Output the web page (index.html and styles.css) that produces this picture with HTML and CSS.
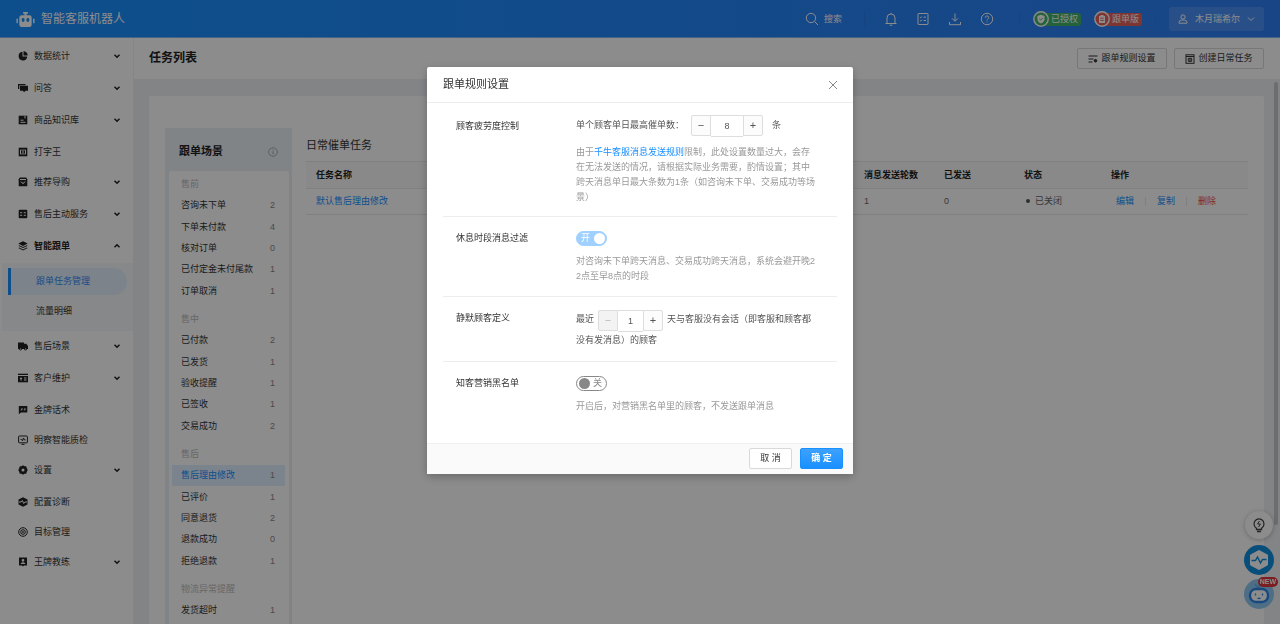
FILE: index.html
```html
<!DOCTYPE html>
<html lang="zh-CN">
<head>
<meta charset="utf-8">
<meta name="viewport" content="width=device-width, initial-scale=1">
<title>智能客服机器人</title>
<link rel="stylesheet" href="styles.css">
</head>
<body>
<header class="topbar">
  <a class="brand" href="#">
    <svg class="brand-logo" viewBox="0 0 20 17" fill="currentColor"><path d="M7.500.5h5v2h-1.500v1.500h3a2.500 2.500 0 0 1 2.500 2.500v7.500a2.500 2.500 0 0 1-2.500 2.500h-8A2.500 2.500 0 0 1 3.500 14V6.500A2.500 2.500 0 0 1 6 4h3V2.500H7.500zM7.500 7A1.500 1.500 0 0 0 6 8.500v1a1.500 1.500 0 0 0 3 0v-1A1.500 1.500 0 0 0 7.500 7zm5 0A1.500 1.500 0 0 0 11 8.500v1a1.500 1.500 0 0 0 3 0v-1A1.500 1.500 0 0 0 12.500 7z"/><rect x=".5" y="7.500" width="1.500" height="5" rx=".7"/><rect x="18" y="7.500" width="1.500" height="5" rx=".7"/></svg>
    <span>智能客服机器人</span>
  </a>
  <button class="top-search" type="button">
    <svg class="icon-top" viewBox="0 0 14 14"><circle cx="6" cy="6" r="4.700"/><path d="M9.500 9.500l3.500 3.500"/></svg>
    <span>搜索</span>
  </button>
  <nav class="top-tools">
    <button type="button" aria-label="通知"><svg class="icon-top" viewBox="0 0 14 14"><path d="M1.500 11.500h11M3 11.500V6a4 4 0 0 1 8 0v5.500M7 2V.800M5.700 13.200h2.600"/></svg></button>
    <button type="button" aria-label="记录"><svg class="icon-top" viewBox="0 0 14 14"><rect x="2" y="1.500" width="10" height="11" rx=".5"/><path d="M4 5.200l.8.600 1-1.300M7.500 5.200H10M4 8.500l.8.600 1-1.300M7.500 8.500H10"/></svg></button>
    <button type="button" aria-label="下载"><svg class="icon-top" viewBox="0 0 14 14"><path d="M7 1.500v7.500M4 6.300l3 3 3-3M1.500 10v2.700h11V10"/></svg></button>
    <button type="button" aria-label="帮助"><svg class="icon-top" viewBox="0 0 14 14"><circle cx="7" cy="7" r="5.700"/><path d="M5.300 5.800A1.700 1.700 0 1 1 7.600 7.200Q7 7.500 7 8.400M7 9.500v1"/></svg></button>
  </nav>
  <div class="top-tags">
    <span class="tag tag-green"><svg class="tag-icon" viewBox="0 0 16 16"><circle cx="8" cy="8" r="7.200" fill="#43b36b" stroke="#fff" stroke-width="1.400"/><path d="M8 3.800l3.600 1.200v3c0 2.200-1.500 3.600-3.600 4.500C5.900 11.600 4.400 10.200 4.400 8V5z" fill="#fff"/><path d="M6.300 7.900l1.300 1.200 2.200-2.200" fill="none" stroke="#43b36b"/></svg>已授权</span>
    <span class="tag tag-red"><svg class="tag-icon" viewBox="0 0 16 16"><circle cx="8" cy="8" r="7.200" fill="#e8625c" stroke="#fff" stroke-width="1.400"/><path d="M5 5h1.500V4h3v1H11v7H5z" fill="#fff"/><path d="M6.300 7.200h3.400M6.300 9.400h3.400" stroke="#e8625c"/></svg>跟单版</span>
  </div>
  <button class="user" type="button">
    <svg class="icon-user" viewBox="0 0 10 10"><circle cx="5" cy="3" r="2.100"/><path d="M1 9.200V8.500Q1 6.300 3.600 6h2.800Q9 6.300 9 8.500v.7z"/></svg>
    <span>木月瑞希尔</span>
    <svg class="icon-caret" viewBox="0 0 8 8"><path d="M1 2.500l3 3 3-3"/></svg>
  </button>
</header>

<div class="shell">
  <nav class="sidebar">
    <a class="side-item has-sub" href="#"><svg class="side-icon" viewBox="0 0 10 10"><path d="M4.500.8v4.700h4.700A4.300 4.300 0 1 1 4.500.8z"/><path d="M5.500.3a4.200 4.200 0 0 1 4.200 4.200H5.500z"/></svg><span>数据统计</span><svg class="chev" viewBox="0 0 8 8"><path d="M1.500 2.700L4 5.200l2.500-2.500"/></svg></a>
    <a class="side-item has-sub" href="#"><svg class="side-icon" viewBox="0 0 10 10"><path d="M0 1h7.500v1.200H1.300V6H0z"/><path d="M2 2.800h8v5H7.500L6 9.300 5 7.800H2z"/></svg><span>问答</span><svg class="chev" viewBox="0 0 8 8"><path d="M1.500 2.700L4 5.200l2.500-2.500"/></svg></a>
    <a class="side-item has-sub" href="#"><svg class="side-icon" viewBox="0 0 10 10"><path d="M.7.7h8.600v8.600H.7z"/><path class="cut" d="M2.500 5.200h3M2.500 7.300h5M7 1v2.500"/></svg><span>商品知识库</span><svg class="chev" viewBox="0 0 8 8"><path d="M1.500 2.700L4 5.200l2.500-2.500"/></svg></a>
    <a class="side-item" href="#"><svg class="side-icon" viewBox="0 0 10 10"><path d="M.7.7h8.600v8.600H.7z"/><path class="cut" d="M3.700 3H2.500v4h1.200M6.300 3h1.200v4H6.300M5 2.300v5.400"/></svg><span>打字王</span></a>
    <a class="side-item has-sub" href="#"><svg class="side-icon" viewBox="0 0 10 10"><path d="M1.800.5h6.400l1.100 1.700v7.100H.7V2.200z"/><path class="cut" d="M2 2.500h6M3 4.500Q5 8.300 7 4.500"/></svg><span>推荐导购</span><svg class="chev" viewBox="0 0 8 8"><path d="M1.500 2.700L4 5.200l2.500-2.500"/></svg></a>
    <a class="side-item has-sub" href="#"><svg class="side-icon" viewBox="0 0 10 10"><rect x=".7" y=".7" width="8.600" height="8.600" rx="1"/><path class="cut" d="M2.200 3.700h2M5.800 3.700h2M2.200 6.300h2M5.800 6.300h2"/></svg><span>售后主动服务</span><svg class="chev" viewBox="0 0 8 8"><path d="M1.500 2.700L4 5.200l2.500-2.500"/></svg></a>
    <a class="side-item has-sub is-open" href="#"><svg class="side-icon" viewBox="0 0 10 10"><path d="M5 .3l4.700 2.300L5 4.900.3 2.600z"/><path d="M1.300 4.200L5 6l3.700-1.800 1 .5L5 7 .3 4.700z"/><path d="M1.300 6.600L5 8.400l3.700-1.800 1 .5L5 9.500.3 7.100z"/></svg><span>智能跟单</span><svg class="chev" viewBox="0 0 8 8"><path d="M1.500 5.200L4 2.700l2.500 2.500"/></svg></a>
    <div class="submenu">
      <a class="sub-item is-active" href="#">跟单任务管理</a>
      <a class="sub-item" href="#">流量明细</a>
    </div>
    <a class="side-item has-sub" href="#"><svg class="side-icon" viewBox="0 0 10 10"><path d="M0 1.500h6v1.200h2.300L10 5v3H0z"/><circle cx="2.500" cy="8" r="1.400"/><circle cx="7.500" cy="8" r="1.400"/><path class="cut" d="M2 8h1M7 8h1"/></svg><span>售后场景</span><svg class="chev" viewBox="0 0 8 8"><path d="M1.500 2.700L4 5.200l2.500-2.500"/></svg></a>
    <a class="side-item has-sub" href="#"><svg class="side-icon" viewBox="0 0 10 10"><path d="M0 .7h10v8.600H0z"/><path class="cut" d="M0 2.500h10M2 5.500h2M3 4.500v3M6 5h2.500M6 7h2.500"/></svg><span>客户维护</span><svg class="chev" viewBox="0 0 8 8"><path d="M1.500 2.700L4 5.200l2.500-2.500"/></svg></a>
    <a class="side-item" href="#"><svg class="side-icon" viewBox="0 0 10 10"><path d="M.8 1h8.500v6.500H3L.8 9.300z"/><path class="cut" d="M4 3.200v1.600H2.800M7 3.200v1.600H5.800"/></svg><span>金牌话术</span></a>
    <a class="side-item" href="#"><svg class="side-icon line" viewBox="0 0 10 10"><rect x=".6" y="1" width="8.800" height="6.800" rx=".8"/><path d="M3.500 9.300h3M2.500 4.300h1l1 1.500 1-2.800L6.500 5h1"/></svg><span>明察智能质检</span></a>
    <a class="side-item has-sub" href="#"><svg class="side-icon" viewBox="0 0 10 10"><path fill-rule="evenodd" d="M5 .3l1.500 1h1.700l.5 1.700L9.700 5 8.700 7l-.5 1.700H6.500L5 9.700l-1.500-1H1.800L1.300 7 .3 5l1-2 .5-1.700h1.700zM5 3.500a1.500 1.500 0 1 0 0 3 1.500 1.500 0 0 0 0-3z"/></svg><span>设置</span><svg class="chev" viewBox="0 0 8 8"><path d="M1.500 2.700L4 5.200l2.500-2.500"/></svg></a>
    <a class="side-item" href="#"><svg class="side-icon" viewBox="0 0 10 10"><path d="M5 .2l4.500 2.300v5L5 9.800.5 7.500v-5z"/><path class="cut" d="M1 5h2l1.300-1.500L5.700 6.500 7 5h2"/></svg><span>配置诊断</span></a>
    <a class="side-item" href="#"><svg class="side-icon line" viewBox="0 0 10 10"><circle cx="5" cy="5" r="4.300"/><circle cx="5" cy="5" r="2.300"/><circle cx="5" cy="5" r=".5"/></svg><span>目标管理</span></a>
    <a class="side-item has-sub" href="#"><svg class="side-icon" viewBox="0 0 10 10"><path fill-rule="evenodd" d="M1 .6h8v8H6L5 9.600l-1-1H1zM5 2a1.300 1.300 0 1 0 0 2.700A1.300 1.300 0 0 0 5 2zM2.600 7h4.800Q7 5.300 5 5.300T2.600 7z"/></svg><span>王牌教练</span><svg class="chev" viewBox="0 0 8 8"><path d="M1.500 2.700L4 5.200l2.500-2.500"/></svg></a>
  </nav>

  <main class="main">
    <div class="page-head">
      <h1>任务列表</h1>
      <div class="page-actions">
        <button class="btn" type="button"><svg class="btn-icon" viewBox="0 0 10 10"><path d="M.5 2h9M.5 5h5M.5 8h4"/><circle cx="7.500" cy="6.700" r="1.300" fill="currentColor"/></svg>跟单规则设置</button>
        <button class="btn" type="button"><svg class="btn-icon" viewBox="0 0 10 10"><rect x="1" y=".8" width="8" height="8.500"/><path d="M1 2.500h8M3.300 4.300h3.400v3H3.300zM5 4.300v3"/></svg>创建日常任务</button>
      </div>
    </div>
    <div class="content">
      <section class="card">
        <aside class="scenes">
          <div class="scenes-head"><h2>跟单场景</h2><svg class="icon-info" viewBox="0 0 10 10"><circle cx="5" cy="5" r="4.300"/><path d="M5 4.300v3M5 2.500v1"/></svg></div>
          <div class="scenes-body">
            <h3>售前</h3>
            <ul>
              <li><a href="#">咨询未下单</a><span>2</span></li>
              <li><a href="#">下单未付款</a><span>4</span></li>
              <li><a href="#">核对订单</a><span>0</span></li>
              <li><a href="#">已付定金未付尾款</a><span>1</span></li>
              <li><a href="#">订单取消</a><span>1</span></li>
            </ul>
            <h3>售中</h3>
            <ul>
              <li><a href="#">已付款</a><span>2</span></li>
              <li><a href="#">已发货</a><span>1</span></li>
              <li><a href="#">验收提醒</a><span>1</span></li>
              <li><a href="#">已签收</a><span>1</span></li>
              <li><a href="#">交易成功</a><span>2</span></li>
            </ul>
            <h3>售后</h3>
            <ul>
              <li class="is-active"><a href="#">售后理由修改</a><span>1</span></li>
              <li><a href="#">已评价</a><span>1</span></li>
              <li><a href="#">同意退货</a><span>2</span></li>
              <li><a href="#">退款成功</a><span>0</span></li>
              <li><a href="#">拒绝退款</a><span>1</span></li>
            </ul>
            <h3>物流异常提醒</h3>
            <ul class="short">
              <li><a href="#">发货超时</a><span>1</span></li>
            </ul>
          </div>
        </aside>
        <div class="tasks">
          <h2>日常催单任务</h2>
          <table>
            <colgroup><col><col class="c-rounds"><col class="c-sent"><col class="c-state"><col class="c-ops"></colgroup>
            <thead><tr><th>任务名称</th><th>消息发送轮数</th><th>已发送</th><th>状态</th><th>操作</th></tr></thead>
            <tbody><tr>
              <td><a class="link" href="#">默认售后理由修改</a></td><td>1</td><td>0</td>
              <td><span class="dot"></span>已关闭</td>
              <td><div class="ops"><a class="link" href="#">编辑</a><a class="link" href="#">复制</a><a class="danger" href="#">删除</a></div></td>
            </tr></tbody>
          </table>
        </div>
      </section>
      <div class="scrollbar"></div>
    </div>
  </main>
</div>

<div class="floaters">
  <button class="float float-tip" type="button" aria-label="提示"><svg viewBox="0 0 28 28" fill="none" stroke="#444" stroke-width="1.300"><path d="M11.500 18.500v-1.300a5 5 0 1 1 5 0v1.300zM12 20.500h4"/><path d="M14.500 10l-2 3h3l-2 3" stroke-width="1"/></svg></button>
  <button class="float float-pulse" type="button" aria-label="诊断"><svg viewBox="0 0 30 30"><path d="M15 5.500l8.500 4.500v10L15 24.500 6.500 20V10z" fill="#fff" stroke="#fff" stroke-linejoin="round"/><path d="M7.500 15.500h4l2-3.500 3 6 2-3.500h4" fill="none" stroke="#108ee0" stroke-width="1.500"/></svg></button>
  <button class="float float-bot" type="button" aria-label="机器人"><svg viewBox="0 0 30 30"><path d="M14 9l-3-4M15 9V6" stroke="#62b1f5" stroke-width="1.600"/><rect x="6" y="10" width="18" height="13" rx="6" fill="#fff" stroke="#2a86e8" stroke-width="2.400"/><path d="M11.500 14.500v2M18.500 14.500v2M13.500 19q1.500 1 3 0" fill="none" stroke="#2a86e8" stroke-width="1.300"/></svg><span class="new">NEW</span></button>
</div>

<div class="mask">
  <form class="modal" role="dialog" aria-labelledby="dlg-title">
    <div class="modal-head">
      <h2 id="dlg-title">跟单规则设置</h2>
      <button class="close" type="button" aria-label="关闭"><svg viewBox="0 0 10 10"><path d="M1 1l8 8M9 1L1 9"/></svg></button>
    </div>
    <div class="modal-body">
      <div class="rule">
        <label class="rule-name" for="max-count">顾客疲劳度控制</label>
        <div class="rule-value">
          <div class="line"><span>单个顾客单日最高催单数：</span>
            <span class="stepper"><button type="button" aria-label="减少">−</button><input id="max-count" type="text" value="8"><button type="button" aria-label="增加">+</button></span>
            <span class="unit">条</span></div>
          <p class="hint">由于<a class="link" href="#">千牛客服消息发送规则</a>限制，此处设置数量过大，会存在无法发送的情况，请根据实际业务需要，酌情设置；其中跨天消息单日最大条数为1条（如咨询未下单、交易成功等场景）</p>
        </div>
      </div>
      <div class="rule">
        <label class="rule-name" for="rest-filter">休息时段消息过滤</label>
        <div class="rule-value">
          <label class="switch"><input id="rest-filter" type="checkbox" checked disabled><span class="track"><span class="on">开</span><span class="off">关</span></span></label>
          <p class="hint">对咨询未下单跨天消息、交易成功跨天消息，系统会避开晚22点至早8点的时段</p>
        </div>
      </div>
      <div class="rule">
        <label class="rule-name" for="silent-days">静默顾客定义</label>
        <div class="rule-value sentence">最近<span class="stepper small"><button type="button" aria-label="减少" disabled>−</button><input id="silent-days" type="text" value="1"><button type="button" aria-label="增加">+</button></span>天与客服没有会话（即客服和顾客都没有发消息）的顾客</div>
      </div>
      <div class="rule">
        <label class="rule-name" for="blacklist">知客营销黑名单</label>
        <div class="rule-value">
          <label class="switch"><input id="blacklist" type="checkbox"><span class="track"><span class="on">开</span><span class="off">关</span></span></label>
          <p class="hint">开启后，对营销黑名单里的顾客，不发送跟单消息</p>
        </div>
      </div>
    </div>
    <div class="modal-foot">
      <button class="btn" type="button">取 消</button>
      <button class="btn primary" type="submit">确 定</button>
    </div>
  </form>
</div>
</body>
</html>
```

FILE: styles.css
```css
* { box-sizing: border-box; }
body {
  margin: 0;
  height: 100vh;
  overflow: hidden;
  display: flex;
  flex-direction: column;
  font-family: "Liberation Sans", "Noto Sans CJK SC", sans-serif;
  font-size: 9px;
  line-height: 15px;
  color: #333;
  background: #eef0f5;
}
h1, h2, h3, p, ul { margin: 0; padding: 0; }
ul { list-style: none; }
a { color: inherit; text-decoration: none; }
button, input { font: inherit; color: inherit; }
button { padding: 0; border: 0; background: none; }
svg { display: block; flex: none; }
.link { color: #1890ff; }

/* top bar */
.topbar {
  flex: none;
  height: 38px;
  padding: 1px 16px 0;
  display: flex;
  align-items: center;
  color: #fff;
  background: linear-gradient(90deg, #1890ff, #2f7ff5);
  border-bottom: 1px solid #7db4f5;
}
.brand { display: flex; align-items: center; gap: 6px; margin-right: auto; font-size: 12px; }
.brand-logo { width: 19px; height: 17px; }
.icon-top { width: 14px; height: 14px; fill: none; stroke: currentColor; }
.top-search { display: flex; align-items: center; gap: 5px; padding-right: 22px; border-right: 1px solid #2b7aec; }
.top-tools { display: flex; gap: 18px; padding: 0 25px 0 19px; border-right: 1px solid #2b7aec; }
.top-tags { display: flex; gap: 13px; padding: 0 13px; border-right: 1px solid #2b7aec; margin-right: 13px; }
.tag { display: flex; align-items: center; height: 13px; padding-right: 3px; gap: 2px; border-radius: 3px; }
.tag-icon { width: 16px; height: 16px; }
.tag-green { background: linear-gradient(90deg, #43b36b 0 100%) 8px 0 no-repeat; }
.tag-red { background: linear-gradient(90deg, #e8625c 0 100%) 8px 0 no-repeat; }
.user { display: flex; align-items: center; gap: 7px; height: 24px; padding: 0 9px; border-radius: 3px; background: #4b91f8; }
.icon-user { width: 10px; height: 10px; fill: none; stroke: currentColor; }
.icon-caret { width: 8px; height: 8px; fill: none; stroke: currentColor; }

.shell { flex: 1; min-height: 0; display: flex; }

/* side menu */
.sidebar { flex: none; width: 133px; padding: 3px 0 0 2px; background: #fff; }
.side-item { display: flex; align-items: center; gap: 6px; height: 30px; padding: 0 12px 0 16px; }
.side-item.has-sub { margin-bottom: 2px; }
.side-item.is-open { font-weight: bold; color: #222; }
.side-icon { width: 10px; height: 10px; fill: #222; }
.side-icon .cut { fill: none; stroke: #fff; }
.side-icon.line { fill: none; stroke: #222; }
.chev { width: 8px; height: 8px; margin-left: auto; fill: none; stroke: #222; stroke-width: 1.5; }
.submenu { padding: 5px 6px 6px; background: #f5f7fa; display: grid; gap: 3px; }
.sub-item { height: 27px; line-height: 27px; padding-left: 28px; }
.sub-item.is-active { padding-left: 25px; border-left: 3px solid #1890ff; border-radius: 0 14px 14px 0; background: #e3effd; color: #2f8cf5; }

/* page */
.main { flex: 1; min-width: 0; display: flex; flex-direction: column; }
.page-head { flex: none; height: 41px; padding: 0 16px 0 15px; display: flex; align-items: center; justify-content: space-between; background: #fff; border-left: 1px solid #f4f5f7; }
.page-head h1 { font-size: 12px; color: #222; }
.page-actions { display: flex; gap: 7px; }
.btn { display: flex; align-items: center; justify-content: center; gap: 3px; height: 21px; min-width: 43px; padding: 0 10px; border: 1px solid #d9d9d9; border-radius: 2px; background: #fff; }
.page-actions .btn { min-width: 90px; }
.btn-icon { width: 10px; height: 10px; fill: none; stroke: currentColor; }
.content { flex: 1; min-height: 0; display: flex; padding: 17px 2px 0 16px; }
.card { flex: 1; min-width: 0; display: flex; align-items: flex-start; gap: 14px; padding: 32px 16px 0; background: #fff; border-radius: 2px; overflow: hidden; }
.scrollbar { flex: none; width: 4px; height: 443px; margin: -14px 0 0 10px; border-radius: 2px; background: #c4c6ca; }

.scenes { flex: none; width: 127px; background: #ecf0f6; padding: 0 3px 0 4px; }
.scenes-head { display: flex; align-items: center; justify-content: space-between; height: 43px; padding: 4px 11px 0 10px; }
.scenes-head h2 { font-size: 11px; color: #222; }
.icon-info { width: 10px; height: 10px; fill: none; stroke: #aaa; stroke-width: 1; }
.scenes-body { background: #fff; padding: 3px 4px 20px 3px; border-radius: 2px 2px 0 0; }
.scenes h3 { font-size: 9px; font-weight: normal; line-height: 21px; padding-left: 9px; color: #bbb; }
.scenes ul { display: grid; grid-auto-rows: 1fr; height: 107px; margin-bottom: 7px; }
.scenes ul.short { height: 21px; }
.scenes li { display: flex; align-items: center; justify-content: space-between; padding: 0 10px 0 9px; }
.scenes li span { color: #888; }
.scenes li.is-active { background: #e0efff; }
.scenes li.is-active a { color: #1890ff; }

.tasks { flex: 1; min-width: 0; padding-top: 10px; }
.tasks h2 { font-size: 11px; font-weight: normal; margin-bottom: 8px; }
table { width: 100%; table-layout: fixed; border-collapse: collapse; border-top: 1px solid #e8eaec; }
.c-rounds, .c-sent { width: 80px; }
.c-state { width: 87px; }
.c-ops { width: 147px; }
th, td { height: 27px; padding: 0 0 0 10px; text-align: left; border-bottom: 1px solid #e8eaec; }
th { background: #fafafa; color: #222; }
td { height: 26px; color: #666; }
.dot { display: inline-block; width: 4px; height: 4px; margin: 0 5px 1px 2px; border-radius: 50%; background: #555; }
.ops { display: flex; padding-left: 5px; }
.ops a { padding-right: 11px; margin-right: 11px; border-right: 1px solid #e8e8e8; line-height: 9px; }
.ops a:last-child { border: 0; }
.danger { color: #f5484e; }

/* floating helpers */
.floaters { position: fixed; right: 6px; bottom: 15px; display: grid; gap: 4px; justify-items: center; }
.float { position: relative; width: 30px; height: 30px; border-radius: 50%; }
.float-tip { width: 28px; height: 28px; margin-bottom: 2px; background: #fff; box-shadow: 0 1px 5px rgba(0, 0, 0, .25); }
.float-pulse { background: #108ee0; }
.float-bot { background: #8fc8f5; }
.new { position: absolute; right: -4px; top: -2px; padding: 0 2px; border-radius: 5px; font-size: 7px; line-height: 10px; font-weight: bold; color: #fff; background: #e0383e; }

/* dialog */
.mask { position: fixed; inset: 0; display: flex; justify-content: center; align-items: flex-start; padding-top: 67px; background: rgba(0, 0, 0, .45); }
.modal { width: 426px; background: #fff; border-radius: 2px; box-shadow: 0 3px 10px rgba(0, 0, 0, .25); }
.modal-head { display: flex; align-items: center; justify-content: space-between; height: 36px; padding: 0 15px 0 16px; border-bottom: 1px solid #ededed; }
.modal-head h2 { font-size: 11px; font-weight: normal; }
.close svg { width: 10px; height: 10px; fill: none; stroke: #888; }
.modal-body { padding: 0 16px 29px; }
.rule { display: flex; padding: 13px 0 12px 13px; border-bottom: 1px solid #ededed; }
.rule:first-child { padding: 12px 0 11px 13px; }
.rule:last-child { border: 0; padding-bottom: 0; }
.rule-name { flex: none; width: 120px; line-height: 17px; }
.rule:first-child .rule-name { line-height: 23px; }
.rule-value { flex: 1; max-width: 242px; color: #555; }
.line { display: flex; align-items: center; gap: 7px; white-space: nowrap; }
.hint { color: #999; word-break: break-all; }
.line + .hint { margin-top: 9px; }
.switch + .hint { margin-top: 8px; }
.stepper { display: inline-flex; height: 21px; vertical-align: middle; }
.stepper button { width: 20px; border: 1px solid #ddd; border-radius: 2px 0 0 2px; background: #fcfcfc; font-size: 11px; line-height: 17px; }
.stepper button:last-child { border-radius: 0 2px 2px 0; }
.stepper button:disabled { background: #f3f3f3; color: #bbb; }
.stepper input { width: 32px; height: 22px; border: 1px solid #ddd; border-width: 1px 0; padding: 0; text-align: center; background: #fff; }
.stepper.small { margin: 0 4px; vertical-align: top; }
.stepper.small input { width: 25px; }
.sentence { line-height: 18px; }
.unit { margin-left: 2px; }

.switch { display: block; width: 31px; height: 15px; margin-top: 1px; position: relative; }
.switch input { position: absolute; inset: 0; margin: 0; opacity: 0; }
.track { display: flex; align-items: center; justify-content: space-between; height: 15px; padding: 0 4px 0 2px; border: 1px solid #888; border-radius: 8px; color: #888; }
.track::before { content: ""; width: 11px; height: 11px; border-radius: 50%; background: #888; }
.on { display: none; }
input:checked + .track { flex-direction: row-reverse; padding: 0 1px 0 4px; border-color: #9fd0ff; background: #9fd0ff; color: #fff; }
input:checked + .track::before { background: #fff; }
input:checked + .track .on { display: inline; }
input:checked + .track .off { display: none; }

.modal-foot { display: flex; justify-content: flex-end; gap: 8px; padding: 4px 10px 5px; background: #fafafa; border-top: 1px solid #f0f0f0; }
.btn.primary { color: #fff; font-weight: bold; border-color: #1890ff; background: linear-gradient(#3ea1ff, #1890ff); }
```
